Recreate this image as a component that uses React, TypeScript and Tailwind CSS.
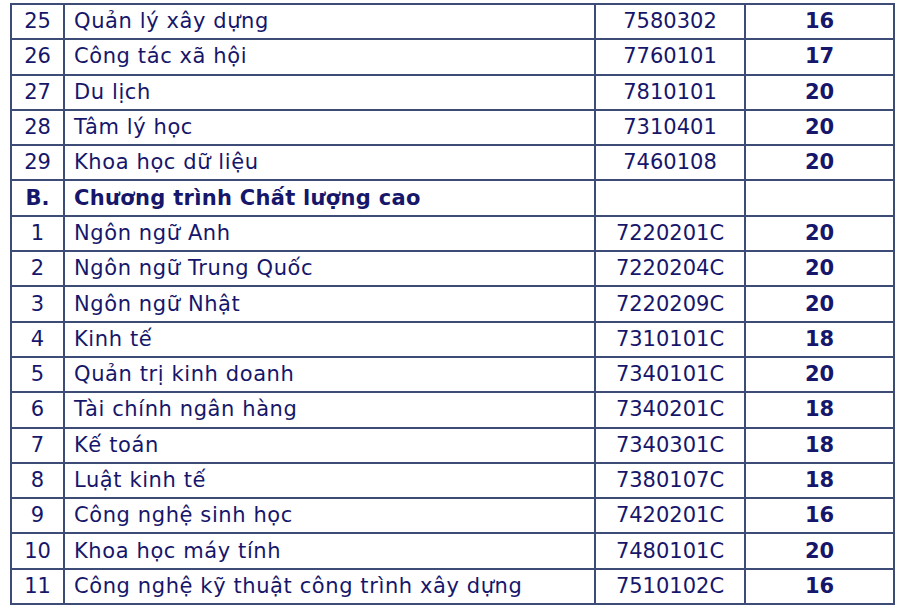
const rows: [string, string, string, string, boolean?][] = [
  ['25', 'Quản lý xây dựng', '7580302', '16'],
  ['26', 'Công tác xã hội', '7760101', '17'],
  ['27', 'Du lịch', '7810101', '20'],
  ['28', 'Tâm lý học', '7310401', '20'],
  ['29', 'Khoa học dữ liệu', '7460108', '20'],
  ['B.', 'Chương trình Chất lượng cao', '', '', true],
  ['1', 'Ngôn ngữ Anh', '7220201C', '20'],
  ['2', 'Ngôn ngữ Trung Quốc', '7220204C', '20'],
  ['3', 'Ngôn ngữ Nhật', '7220209C', '20'],
  ['4', 'Kinh tế', '7310101C', '18'],
  ['5', 'Quản trị kinh doanh', '7340101C', '20'],
  ['6', 'Tài chính ngân hàng', '7340201C', '18'],
  ['7', 'Kế toán', '7340301C', '18'],
  ['8', 'Luật kinh tế', '7380107C', '18'],
  ['9', 'Công nghệ sinh học', '7420201C', '16'],
  ['10', 'Khoa học máy tính', '7480101C', '20'],
  ['11', 'Công nghệ kỹ thuật công trình xây dựng', '7510102C', '16'],
];

export default function App() {
  return (
    <div className="w-[900px] h-[612px] bg-white pt-[3px] pl-[10px] font-['DejaVu_Sans',sans-serif] text-[#16166a]">
      <table className="border-collapse table-fixed w-[883px] text-[21px]">
        <colgroup>
          <col className="w-[53px]" />
          <col className="w-[531px]" />
          <col className="w-[150px]" />
          <col className="w-[149px]" />
        </colgroup>
        <tbody>
          {rows.map(([no, name, code, score, section]) => (
            <tr key={no + name} className="h-[35.3px]">
              <td className={`border-2 border-[#3d4c76] text-center p-0 leading-none ${section ? 'font-bold' : ''}`}>
                {no}
              </td>
              <td className={`border-2 border-[#3d4c76] pl-[9px] p-0 leading-none whitespace-nowrap ${section ? 'font-bold tracking-[0.3px]' : 'tracking-[0.6px]'}`}>
                {name}
              </td>
              <td className="border-2 border-[#3d4c76] text-center p-0 leading-none">{code}</td>
              <td className="border-2 border-[#3d4c76] text-center p-0 leading-none font-bold">{score}</td>
            </tr>
          ))}
        </tbody>
      </table>
    </div>
  );
}
